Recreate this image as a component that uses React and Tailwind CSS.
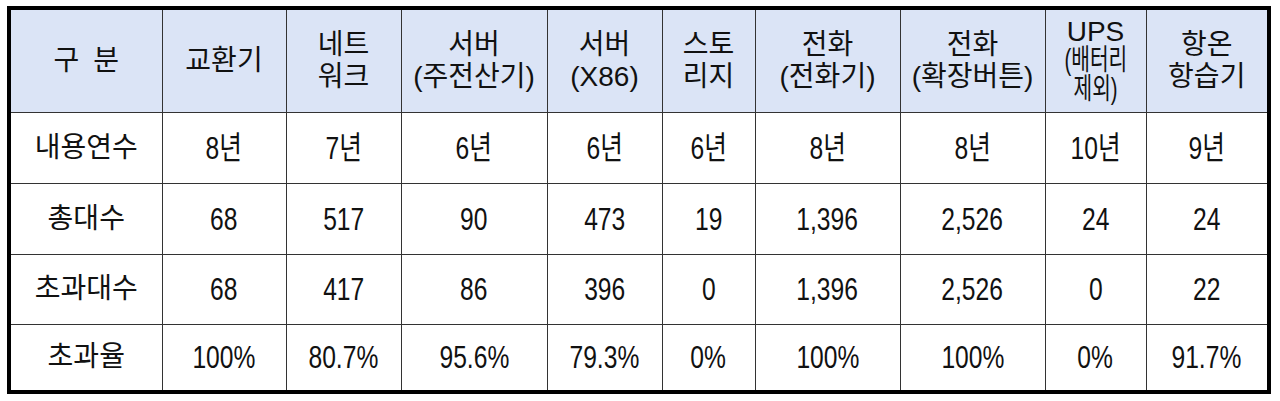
export default function App() {
  const font = {
    fontFamily: '"Liberation Sans", "Noto Sans CJK KR", sans-serif',
  };

  const cols = [153, 124, 115, 146, 115, 93, 145, 145, 101, 123];

  const rows = [
    ["내용연수", "8년", "7년", "6년", "6년", "6년", "8년", "8년", "10년", "9년"],
    ["총대수", "68", "517", "90", "473", "19", "1,396", "2,526", "24", "24"],
    ["초과대수", "68", "417", "86", "396", "0", "1,396", "2,526", "0", "22"],
    ["초과율", "100%", "80.7%", "95.6%", "79.3%", "0%", "100%", "100%", "0%", "91.7%"],
  ];
  const heights = ["h-[71px]", "h-[71px]", "h-[70px]", "h-[68px]"];

  const th = "border border-[#333] bg-[#dbe4f6] text-center align-middle font-normal text-[28px] leading-[32px] text-[#111]";
  const td = "border border-[#333] text-center align-middle text-[#111]";

  return (
    <div className="w-[1280px] h-[401px] bg-white pt-[6px] pl-[7px]" style={font}>
      <table className="table-fixed border-collapse border-4 border-black w-[1264px]">
        <colgroup>
          {cols.map((w, i) => (
            <col key={i} style={{ width: w }} />
          ))}
        </colgroup>
        <thead>
          <tr className="h-[104px]">
            <th className={th}>
              <span className="tracking-[14px] pl-[14px]">구분</span>
            </th>
            <th className={th}>교환기</th>
            <th className={th}>
              네트
              <br />
              워크
            </th>
            <th className={th}>
              서버
              <br />
              (주전산기)
            </th>
            <th className={th}>
              서버
              <br />
              (X86)
            </th>
            <th className={th}>
              스토
              <br />
              리지
            </th>
            <th className={th}>
              전화
              <br />
              (전화기)
            </th>
            <th className={th}>
              전화
              <br />
              (확장버튼)
            </th>
            <th className={th + " !leading-[28px]"}>
              UPS
              <br />
              <span className="inline-block scale-x-[0.7] text-[29px]">(배터리</span>
              <br />
              <span className="inline-block scale-x-[0.7] text-[29px]">제외)</span>
            </th>
            <th className={th}>
              항온
              <br />
              항습기
            </th>
          </tr>
        </thead>
        <tbody>
          {rows.map((r, i) => (
            <tr key={i} className={heights[i]}>
              {r.map((c, j) => (
                <td key={j} className={td}>
                  {j === 0 ? (
                    <span className="text-[28px]">{c}</span>
                  ) : (
                    <span className="inline-block text-[32px] scale-x-[0.77]">{c}</span>
                  )}
                </td>
              ))}
            </tr>
          ))}
        </tbody>
      </table>
    </div>
  );
}
